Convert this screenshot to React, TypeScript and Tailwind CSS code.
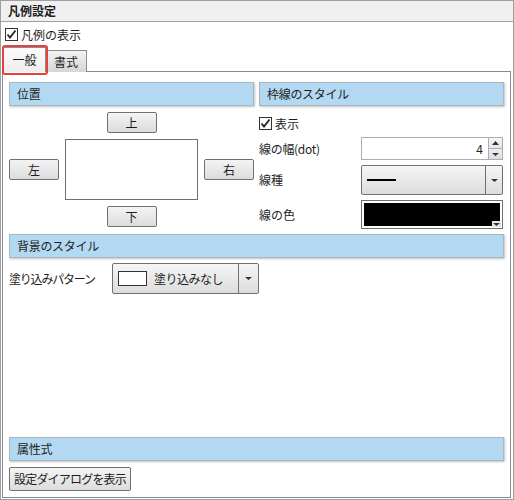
import React from 'react'

const font = { fontFamily: '"Noto Sans CJK JP", "Noto Sans", sans-serif' }

function CheckBox({ label }: { label: string }) {
  return (
    <div className="flex items-center gap-[3px] h-[15px]">
      <svg width="13" height="13" viewBox="0 0 13 13" className="shrink-0">
        <rect x="0.5" y="0.5" width="12" height="12" fill="#fff" stroke="#333" />
        <path d="M2.5 6.5 L5 9.5 L10.5 2.5" fill="none" stroke="#222" strokeWidth="1.8" />
      </svg>
      <span className="text-[12px] leading-none text-[#1e1e1e]">{label}</span>
    </div>
  )
}

function Header({ title }: { title: string }) {
  return (
    <div className="h-[24px] bg-[#b3d8f1] border border-[#a9b7c2] shadow-[1px_1px_2px_rgba(0,0,0,0.25)] flex items-center pl-[7px] text-[12px] text-[#1e1e1e] tracking-[-0.3px]">
      {title}
    </div>
  )
}

function Btn({ label, className = '' }: { label: string; className?: string }) {
  return (
    <div
      className={`h-[21px] border border-[#707070] rounded-[2px] bg-gradient-to-b from-[#f4f4f4] to-[#dcdcdc] flex items-center justify-center text-[12px] text-[#1e1e1e] ${className}`}
    >
      {label}
    </div>
  )
}

function Arrow({ size = 4 }: { size?: number }) {
  return (
    <svg width={size * 2 + 1} height={size} viewBox={`0 0 ${size * 2 + 1} ${size}`}>
      <path d={`M0 0 L${size * 2 + 1} 0 L${size + 0.5} ${size} Z`} fill="#333" />
    </svg>
  )
}

export default function App() {
  return (
    <div style={font} className="w-[514px] h-[500px] bg-white border border-[#a0a0a0] flex flex-col text-[#1e1e1e] overflow-hidden">
      {/* title */}
      <div className="h-[21px] bg-[#f0f0f0] border-b border-[#a0a0a0] flex items-center pl-[7px] text-[12px] font-bold shrink-0">
        凡例設定
      </div>

      <div className="pl-[4px] pt-[5px]">
        <CheckBox label="凡例の表示" />
      </div>

      {/* tabs */}
      <div className="relative flex items-end pl-[2px] mt-[5px] h-[25px] shrink-0">
        <div className="relative z-10 w-[43px] h-[25px] border border-b-0 border-[#898c95] bg-gradient-to-b from-[#fbfbfb] to-[#eeeeee] flex items-center justify-center text-[12px]">
          一般
        </div>
        <div className="w-[41px] h-[22px] border border-l-0 border-b-0 border-[#898c95] bg-gradient-to-b from-[#f2f2f2] to-[#d6d6d6] flex items-center justify-center text-[12px]">
          書式
        </div>
        <div className="absolute left-[1px] top-[-2px] w-[46px] h-[30px] border-2 border-[#e8403a] rounded-[3px] z-20" />
      </div>

      {/* tab panel */}
      <div className="flex-1 ml-[1px] mr-[2px] mb-[1px] -mt-px border border-[#898c95] px-[6px] pt-[10px] flex flex-col">
        <div className="flex gap-[5px]">
          {/* position */}
          <div className="w-[246px] flex flex-col">
            <Header title="位置" />
            <div className="flex flex-col items-center mt-[6px]">
              <Btn label="上" className="w-[50px]" />
              <div className="flex items-center gap-[6px] mt-[6px] w-full">
                <Btn label="左" className="w-[50px]" />
                <div className="w-[133px] h-[61px] border border-[#707070] bg-white" />
                <Btn label="右" className="w-[50px]" />
              </div>
              <Btn label="下" className="w-[50px] mt-[6px]" />
            </div>
          </div>

          {/* border style */}
          <div className="w-[246px] flex flex-col">
            <Header title="枠線のスタイル" />
            <div className="mt-[10px]">
              <CheckBox label="表示" />
            </div>
            <div className="flex items-center mt-[6px]">
              <span className="w-[102px] text-[12px] tracking-[-0.3px]">線の幅(dot)</span>
              <div className="w-[142px] h-[23px] border border-[#abadb3] bg-white flex">
                <div className="flex-1 flex items-center justify-end pr-[5px] text-[12px]">4</div>
                <div className="w-[14px] flex flex-col border-l border-[#abadb3]">
                  <div className="flex-1 flex items-center justify-center bg-gradient-to-b from-[#f6f6f6] to-[#e6e6e6] border-b border-[#abadb3]">
                    <svg width="7" height="4" viewBox="0 0 7 4"><path d="M0 4 L7 4 L3.5 0 Z" fill="#333" /></svg>
                  </div>
                  <div className="flex-1 flex items-center justify-center bg-gradient-to-b from-[#eeeeee] to-[#dddddd]">
                    <Arrow size={3} />
                  </div>
                </div>
              </div>
            </div>
            <div className="flex items-center mt-[5px]">
              <span className="w-[102px] text-[12px]">線種</span>
              <div className="w-[142px] h-[30px] border border-[#707070] rounded-[2px] bg-gradient-to-b from-[#f6f6f6] to-[#dcdcdc] flex">
                <div className="flex-1 flex items-center pl-[5px]">
                  <div className="w-[29px] h-[2px] bg-black" />
                </div>
                <div className="w-[17px] border-l border-[#707070] flex items-center justify-center">
                  <Arrow size={3} />
                </div>
              </div>
            </div>
            <div className="flex items-center mt-[5px]">
              <span className="w-[102px] text-[12px]">線の色</span>
              <div className="relative w-[142px] h-[29px] border border-[#707070] bg-white p-[2px]">
                <div className="w-full h-full bg-black" />
                <div className="absolute right-[1px] bottom-[1px] w-[9px] h-[6px] bg-[#e6e6e6] flex items-center justify-center">
                  <Arrow size={3} />
                </div>
              </div>
            </div>
          </div>
        </div>

        {/* background */}
        <div className="mt-[5px]">
          <Header title="背景のスタイル" />
        </div>
        <div className="flex items-center mt-[5px]">
          <span className="w-[103px] text-[12px] tracking-[-1.2px]">塗り込みパターン</span>
          <div className="w-[147px] h-[31px] border border-[#707070] rounded-[2px] bg-gradient-to-b from-[#f6f6f6] to-[#dcdcdc] flex">
            <div className="flex-1 flex items-center pl-[5px] gap-[7px]">
              <div className="w-[29px] h-[15px] border border-[#333] bg-white" />
              <span className="text-[12px] tracking-[-0.5px]">塗り込みなし</span>
            </div>
            <div className="w-[20px] border-l border-[#707070] flex items-center justify-center">
              <Arrow size={3} />
            </div>
          </div>
        </div>

        <div className="flex-1" />

        {/* attribute */}
        <Header title="属性式" />
        <div className="mt-[6px] mb-[6px]">
          <Btn label="設定ダイアログを表示" className="w-[122px] h-[24px] tracking-[-0.8px]" />
        </div>
      </div>
    </div>
  )
}
